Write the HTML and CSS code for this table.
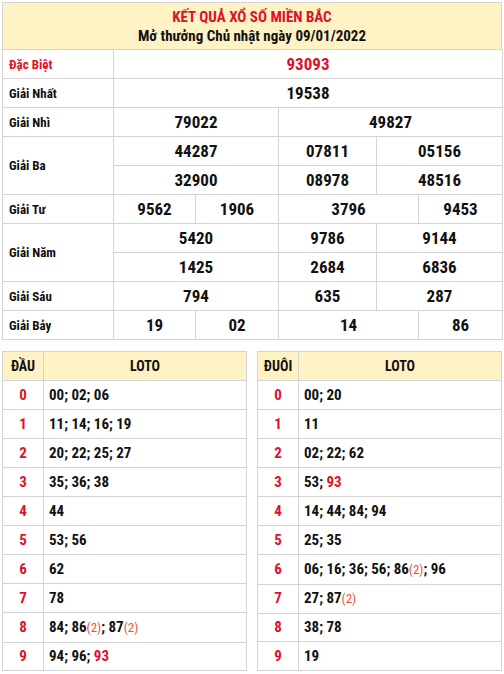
FILE: index.html
```html
<!DOCTYPE html>
<html lang="vi">
<head>
<meta charset="utf-8">
<title>KQXS Miền Bắc</title>
<link rel="stylesheet" href="styles.css">
</head>
<body>
<div class="page">
  <div class="kq">
    <div class="kq-head">
      <div class="kq-title">KẾT QUẢ XỔ SỐ MIỀN BẮC</div>
      <div class="kq-sub">Mở thưởng Chủ nhật ngày 09/01/2022</div>
    </div>
    <div class="row">
      <div class="lbl red">Đặc Biệt</div>
      <div class="num red s5">93093</div>
    </div>
    <div class="row">
      <div class="lbl">Giải Nhất</div>
      <div class="num s5">19538</div>
    </div>
    <div class="row">
      <div class="lbl">Giải Nhì</div>
      <div class="num s2">79022</div>
      <div class="num s3">49827</div>
    </div>
    <div class="row r2">
      <div class="lbl tall">Giải Ba</div>
      <div class="num s2">44287</div>
      <div class="num s1">07811</div>
      <div class="num s2">05156</div>
      <div class="num s2">32900</div>
      <div class="num s1">08978</div>
      <div class="num s2">48516</div>
    </div>
    <div class="row">
      <div class="lbl">Giải Tư</div>
      <div class="num s1">9562</div>
      <div class="num s1">1906</div>
      <div class="num s2">3796</div>
      <div class="num s1">9453</div>
    </div>
    <div class="row r2">
      <div class="lbl tall">Giải Năm</div>
      <div class="num s2">5420</div>
      <div class="num s1">9786</div>
      <div class="num s2">9144</div>
      <div class="num s2">1425</div>
      <div class="num s1">2684</div>
      <div class="num s2">6836</div>
    </div>
    <div class="row">
      <div class="lbl">Giải Sáu</div>
      <div class="num s2">794</div>
      <div class="num s1">635</div>
      <div class="num s2">287</div>
    </div>
    <div class="row">
      <div class="lbl">Giải Bảy</div>
      <div class="num s1">19</div>
      <div class="num s1">02</div>
      <div class="num s2">14</div>
      <div class="num s1">86</div>
    </div>
  </div>

  <div class="loto-wrap">
    <div class="loto">
      <div class="lrow lhead"><div class="k">ĐẦU</div><div class="v">LOTO</div></div>
      <div class="lrow"><div class="k">0</div><div class="v">00; 02; 06</div></div>
      <div class="lrow"><div class="k">1</div><div class="v">11; 14; 16; 19</div></div>
      <div class="lrow"><div class="k">2</div><div class="v">20; 22; 25; 27</div></div>
      <div class="lrow"><div class="k">3</div><div class="v">35; 36; 38</div></div>
      <div class="lrow"><div class="k">4</div><div class="v">44</div></div>
      <div class="lrow"><div class="k">5</div><div class="v">53; 56</div></div>
      <div class="lrow"><div class="k">6</div><div class="v">62</div></div>
      <div class="lrow"><div class="k">7</div><div class="v">78</div></div>
      <div class="lrow"><div class="k">8</div><div class="v">84; 86<span class="cnt">(2)</span>; 87<span class="cnt">(2)</span></div></div>
      <div class="lrow"><div class="k">9</div><div class="v">94; 96; <span class="red">93</span></div></div>
    </div>
    <div class="loto">
      <div class="lrow lhead"><div class="k">ĐUÔI</div><div class="v">LOTO</div></div>
      <div class="lrow"><div class="k">0</div><div class="v">00; 20</div></div>
      <div class="lrow"><div class="k">1</div><div class="v">11</div></div>
      <div class="lrow"><div class="k">2</div><div class="v">02; 22; 62</div></div>
      <div class="lrow"><div class="k">3</div><div class="v">53; <span class="red">93</span></div></div>
      <div class="lrow"><div class="k">4</div><div class="v">14; 44; 84; 94</div></div>
      <div class="lrow"><div class="k">5</div><div class="v">25; 35</div></div>
      <div class="lrow"><div class="k">6</div><div class="v">06; 16; 36; 56; 86<span class="cnt">(2)</span>; 96</div></div>
      <div class="lrow"><div class="k">7</div><div class="v">27; 87<span class="cnt">(2)</span></div></div>
      <div class="lrow"><div class="k">8</div><div class="v">38; 78</div></div>
      <div class="lrow"><div class="k">9</div><div class="v">19</div></div>
    </div>
  </div>
</div>
</body>
</html>
```
FILE: styles.css
```css
* { box-sizing: border-box; }
html, body { margin: 0; padding: 0; background: #fff; }
body {
  font-family: "Roboto Condensed", "Liberation Sans Narrow", "DejaVu Sans Condensed", Roboto, sans-serif;
  font-weight: 700;
  color: #111;
}
.page { padding: 2px 2px 0 2px; width: 504px; }
.red { color: #e0102a; }

.kq {
  border-left: 1px solid #d4d4d4;
  border-top: 1px solid #d4d4d4;
  width: 500px;
}
.kq-head {
  background: #fff2c4;
  height: 47px;
  border-right: 1px solid #d4d4d4;
  border-bottom: 1px solid #d4d4d4;
  display: flex;
  flex-direction: column;
  align-items: center;
  justify-content: center;
  gap: 1px;
}
.kq-title { color: #e0102a; font-size: 15px; line-height: 18px; }
.kq-sub { font-size: 15px; line-height: 18px; }

.row {
  display: grid;
  grid-template-columns: 111px 82px 83px 98px 42px 84px;
  grid-auto-rows: 29px;
}
.row > div {
  border-right: 1px solid #d4d4d4;
  border-bottom: 1px solid #d4d4d4;
  display: flex;
  align-items: center;
}
.lbl { font-size: 13px; padding-left: 6px; }
.r2 .tall { grid-row: span 2; }
.num { justify-content: center; font-size: 17px; }
.s1 { grid-column: span 1; }
.s2 { grid-column: span 2; }
.s3 { grid-column: span 3; }
.s5 { grid-column: span 5; }

.loto-wrap {
  display: flex;
  gap: 10px;
  margin-top: 11px;
}
.loto {
  width: 245px;
  border-left: 1px solid #d4d4d4;
  border-top: 1px solid #d4d4d4;
}
.lrow {
  display: grid;
  grid-template-columns: 41px 1fr;
  height: 29px;
}
.lrow > div {
  border-right: 1px solid #d4d4d4;
  border-bottom: 1px solid #d4d4d4;
  font-size: 15px;
  line-height: 28px;
  white-space: nowrap;
}
.lrow .k { text-align: center; color: #e0102a; }
.lrow .v { padding-left: 5px; }
.lhead > div { background: #fff2c4; }
.lhead .k, .lhead .v { color: #111; font-size: 14px; }
.lhead .v { text-align: center; padding-left: 0; }
.cnt { color: #f0502a; font-size: 13px; font-weight: 400; }
```
